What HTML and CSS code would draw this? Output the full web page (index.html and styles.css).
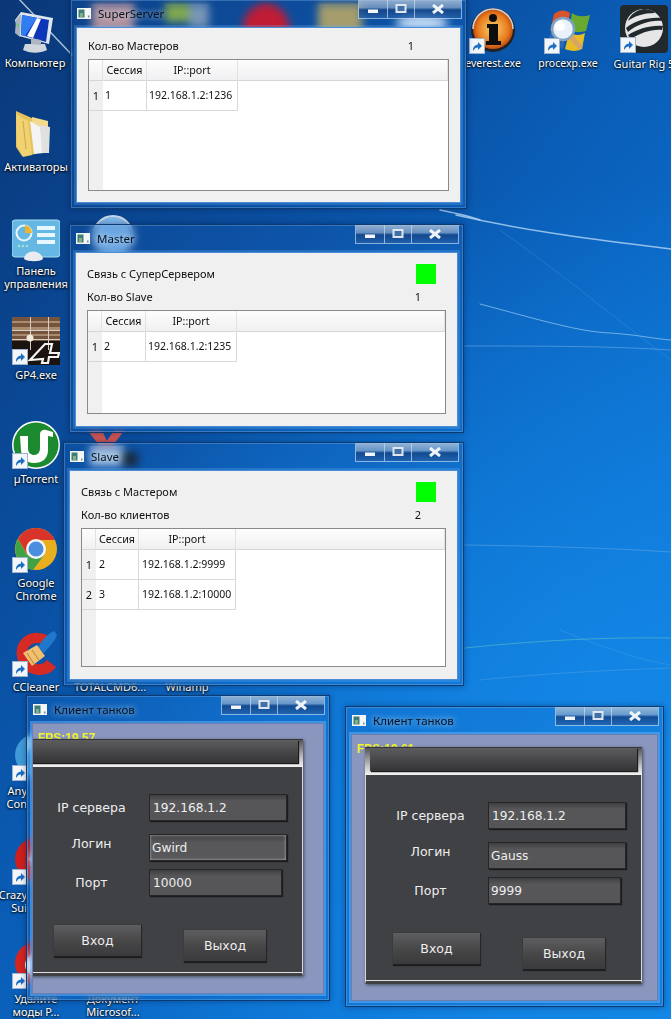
FILE: index.html
```html
<!DOCTYPE html>
<html lang="ru">
<head>
<meta charset="utf-8">
<title>Desktop</title>
<link rel="stylesheet" href="styles.css">
</head>
<body>
<svg class="defs" width="0" height="0">
  <defs>
    <symbol id="badge" viewBox="0 0 16 16">
      <rect x=".5" y=".5" width="15" height="15" fill="#f2f6fb" stroke="#9fb4cc"/>
      <path d="M4 13c0-4 1.500-6 5-6.500V4l4 4-4 4V9.500C7 9.500 5.500 10.500 4 13z" fill="#1f6fc4"/>
    </symbol>
    <symbol id="appicon" viewBox="0 0 14 11">
      <rect width="14" height="11" fill="#f4f6f6"/>
      <rect x="1.500" y="1.500" width="6" height="8" fill="#3f7d78"/>
      <rect x="3" y="5" width="3" height="4" fill="#7db08a"/>
      <rect x="11" y="7.500" width="1.500" height="2" fill="#7a8a90"/>
    </symbol>
    <symbol id="min" viewBox="0 0 12 10"><rect x="1" y="5.500" width="10" height="3.500" fill="#f2f5f9"/></symbol>
    <symbol id="max" viewBox="0 0 12 10"><rect x="1.500" y="1" width="9" height="7" fill="#3f70a8" stroke="#dfe6ee" stroke-width="2"/></symbol>
    <symbol id="close" viewBox="0 0 12 10"><path d="M1 1L11 9M11 1L1 9" stroke="#eef3f8" stroke-width="3" fill="none"/></symbol>
  </defs>
</svg>

<main class="desktop">
  <svg class="streaks" width="671" height="1019" viewBox="0 0 671 1019">
    <g fill="none" stroke-linecap="round">
      <path d="M18 -2L72 55" stroke="#cfe0f2" stroke-width="1.500" opacity=".8"/>
      <path d="M440 210C460 214 470 216 480 220" stroke="#bcd8f4" stroke-width="1.500" opacity=".8"/>
      <path d="M456 215C530 232 600 240 671 249" stroke="#a8d0f2" stroke-width="1.500" opacity=".85"/>
      <path d="M480 304C540 320 580 332 610 333C640 335 655 339 671 340" stroke="#8cc0ec" stroke-width="1" opacity=".8"/>
      <path d="M465 346C540 346 610 346 671 350" stroke="#6cabe4" stroke-width="1" opacity=".6"/>
      <path d="M465 545C540 546 610 548 671 552" stroke="#6cabe4" stroke-width="1" opacity=".5"/>
      <path d="M465 648C540 640 610 637 671 638" stroke="#5cc0c8" stroke-width="1" opacity=".6"/>
      <path d="M480 680C560 672 620 670 671 668" stroke="#5faae6" stroke-width="1" opacity=".4"/>
      <path d="M500 230C570 280 630 330 671 360" stroke="#5c9ee0" stroke-width="1" opacity=".3"/>
      <path d="M560 630C610 650 640 660 671 665" stroke="#5faae6" stroke-width="1" opacity=".3"/>
    </g>
  </svg>

  <!-- icons hidden behind the glass of the windows -->
  <div class="behind behind-pink"></div>
  <div class="behind behind-green"></div>
  <div class="behind behind-slate"></div>
  <div class="behind behind-red"></div>
  <div class="behind behind-tan"></div>
  <div class="behind behind-glow"></div>
  <div class="behind behind-disc"></div>
  <div class="behind behind-check"></div>
  <div class="behind behind-pale"></div>
  <div class="behind behind-dark"></div>

  <figure class="icon icon-computer">
    <svg width="48" height="48" viewBox="0 0 48 48">
      <path d="M4 14L10 6 42 12 38 38 8 30z" fill="#dfe6ee"/>
      <path d="M11 9L38 14 35 36 10 29z" fill="#0e36b8"/>
      <path d="M11 9L26 12 14 30 10 29z" fill="#2f7df0"/>
      <path d="M26 12L30 13 22 32 16 30z" fill="#ffffff"/>
      <path d="M5 14L10 8 9 31 4 27z" fill="#a8b2bc"/>
      <path d="M14 38L34 38 36 44C28 48 18 47 12 44z" fill="#cfd6dd"/>
      <path d="M20 32L30 34 30 39 20 38z" fill="#aeb6c0"/>
      <rect x="6" y="18" width="2" height="3" fill="#6fce6f"/>
    </svg>
    <figcaption>Компьютер</figcaption>
  </figure>

  <figure class="icon icon-folder">
    <svg width="48" height="48" viewBox="6 0 48 48">
      <path d="M10 2L28 10 30 12 30 45 16 47 10 38z" fill="#e6c25a"/>
      <path d="M26 8L42 12 42 42 28 44 26 22z" fill="#f2d98c"/>
      <path d="M24 12L34 18 38 44 28 45z" fill="#f4f4f4"/>
      <path d="M34 16L44 18 43 44 36 44z" fill="#e0e0e0"/>
      <path d="M10 5L22 12 26 46 17 48 11 36z" fill="#f0d275"/>
      <path d="M17 12L20 40" stroke="#d2a93e" stroke-width="1"/>
    </svg>
    <figcaption>Активаторы</figcaption>
  </figure>

  <figure class="icon icon-panel">
    <svg width="48" height="48" viewBox="0 0 48 48">
      <rect y="1" width="48" height="37" rx="3" fill="#65b8e4"/>
      <rect y="1" width="48" height="37" rx="3" fill="none" stroke="#a8daf2"/>
      <circle cx="12" cy="14" r="7.500" fill="none" stroke="#e8f6ff" stroke-width="2"/>
      <path d="M13 6a8 8 0 0 1 7 8h-7z" fill="#f0b030"/>
      <rect x="25" y="7" width="18" height="4" fill="#e8f6ff"/>
      <rect x="25" y="14" width="18" height="4" fill="#e8f6ff"/>
      <rect x="25" y="21" width="18" height="4" fill="#e8f6ff"/>
      <path d="M12 40C13 30 29 30 31 40C28 43 16 43 12 40z" fill="#e8ecef"/>
      <g fill="#9ee0d0"><circle cx="7" cy="27" r="1.300"/><circle cx="11" cy="27" r="1.300"/><circle cx="15" cy="27" r="1.300"/></g>
    </svg>
    <figcaption>Панель<br>управления</figcaption>
  </figure>

  <figure class="icon icon-gp4">
    <svg width="48" height="48" viewBox="0 0 48 48">
      <rect width="48" height="48" fill="#1a1310"/>
      <rect width="48" height="24" fill="#74543c"/>
      <g fill="#a98b70"><rect y="4" width="48" height="2"/><rect y="10" width="48" height="3"/><rect y="17" width="48" height="2"/></g>
      <g fill="#d8cfc4"><rect y="13" width="48" height="1"/><rect y="22" width="48" height="1"/><rect x="18" width="1" height="33"/><rect x="36" width="1" height="33"/></g>
      <circle cx="18" cy="21" r="3.500" fill="#efe7da"/>
      <path d="M18 43L33 27 40 27 38 36 47 36 46 40 37 40 36 46 30 46 31 42z" fill="none" stroke="#f3f3f3" stroke-width="2.200"/>
    </svg>
    <svg class="badge" width="16" height="16"><use href="#badge"/></svg>
    <figcaption>GP4.exe</figcaption>
  </figure>

  <figure class="icon icon-torrent">
    <svg width="48" height="48" viewBox="0 0 48 48">
      <circle cx="24" cy="24" r="24" fill="#fff"/>
      <circle cx="24" cy="24" r="22.500" fill="#1c8a2e"/>
      <path d="M8 15H16V27C16 32 19 34 22 34C26 34 28 31 28 27V13C28 10 31 8 34 9L41 11V16L36 15V29C36 38 30 42 22 42C14 42 10 36 9 30z" fill="#fff"/>
    </svg>
    <svg class="badge" width="16" height="16"><use href="#badge"/></svg>
    <figcaption>µTorrent</figcaption>
  </figure>

  <figure class="icon icon-chrome">
    <svg width="48" height="48" viewBox="0 0 48 48">
      <circle cx="24" cy="24" r="21" fill="#e8ae1e"/>
      <path d="M24 3A21 21 0 0 0 6 14L15 29 24 15H43A21 21 0 0 0 24 3z" fill="#d8342a"/>
      <path d="M6 14A21 21 0 0 0 21 45L32 30 15 30z" fill="#3fa345"/>
      <circle cx="24" cy="24" r="10" fill="#f4f4f4"/>
      <circle cx="24" cy="24" r="7.500" fill="#4a8ee0"/>
    </svg>
    <svg class="badge" width="16" height="16"><use href="#badge"/></svg>
    <figcaption>Google<br>Chrome</figcaption>
  </figure>

  <figure class="icon icon-ccleaner">
    <svg width="48" height="48" viewBox="0 0 48 48">
      <path d="M40 10C30 0 12 2 6 16C1 30 10 44 26 46C34 46 40 44 44 38L35 31C30 38 18 36 15 27C13 18 22 10 32 16z" fill="#d62a24"/>
      <path d="M42 2C34 6 30 12 26 18L32 24C37 18 43 12 45 6z" fill="#1f78cc"/>
      <path d="M11 24L25 16 33 27 20 37z" fill="#f0bf70"/>
      <path d="M15 24L22 35M20 21L27 31" stroke="#b58240" stroke-width="1"/>
    </svg>
    <svg class="badge" width="16" height="16"><use href="#badge"/></svg>
    <figcaption>CCleaner</figcaption>
  </figure>

  <figure class="icon icon-any">
    <svg width="48" height="48" viewBox="0 0 48 48">
      <circle cx="24" cy="22" r="21" fill="#3f9bd8"/>
      <path d="M14 6C22 0 34 2 38 8 28 8 20 12 14 22z" fill="#a8dcf4"/>
    </svg>
    <svg class="badge" width="16" height="16"><use href="#badge"/></svg>
    <figcaption>Any<br>Con</figcaption>
  </figure>

  <figure class="icon icon-crazy">
    <svg width="48" height="48" viewBox="0 0 48 48">
      <circle cx="24" cy="22" r="21" fill="#cf1f1c"/>
      <path d="M16 22L26 12V32z" fill="#fff"/>
    </svg>
    <svg class="badge" width="16" height="16"><use href="#badge"/></svg>
    <figcaption>Crazy<br>Sui</figcaption>
  </figure>

  <figure class="icon icon-mods">
    <svg width="48" height="48" viewBox="0 0 48 48">
      <circle cx="24" cy="22" r="21" fill="#d62420"/>
      <circle cx="24" cy="24" r="11" fill="#fff"/>
      <circle cx="24" cy="7" r="3" fill="#1c3f9c"/>
    </svg>
    <svg class="badge" width="16" height="16"><use href="#badge"/></svg>
    <figcaption>Удалите<br>моды Р...</figcaption>
  </figure>

  <figure class="icon icon-doc">
    <figcaption>Документ<br>Microsof...</figcaption>
  </figure>
  <figure class="icon icon-total"><figcaption>TOTALCMD6...</figcaption></figure>
  <figure class="icon icon-winamp"><figcaption>Winamp</figcaption></figure>

  <figure class="icon icon-everest">
    <svg width="48" height="48" viewBox="0 0 48 48">
      <defs><radialGradient id="gEv" cx=".5" cy=".5" r=".55"><stop offset="0" stop-color="#f7d667"/><stop offset=".7" stop-color="#e8791e"/><stop offset="1" stop-color="#a93a0a"/></radialGradient></defs>
      <circle cx="24" cy="24" r="22" fill="#222"/>
      <circle cx="24" cy="23" r="20" fill="url(#gEv)"/>
      <path d="M4 23a20 20 0 0 1 40 0" fill="none" stroke="#cfd6dd" stroke-width="1.500"/>
      <circle cx="24" cy="12" r="4" fill="#0d0d0d"/>
      <path d="M18 18H29V35H32V39H17V35H20V22H18z" fill="#0d0d0d"/>
    </svg>
    <svg class="badge" width="16" height="16"><use href="#badge"/></svg>
    <figcaption>everest.exe</figcaption>
  </figure>

  <figure class="icon icon-procexp">
    <svg width="48" height="48" viewBox="0 0 48 48">
      <path d="M10 8C16 3 22 4 26 7L23 24C18 21 12 21 6 25z" fill="#d9532b"/>
      <path d="M28 7C33 11 40 11 46 9L42 25C36 27 30 26 25 24z" fill="#6aa92f"/>
      <path d="M22 26C17 24 11 24 6 28L3 43C9 40 15 40 19 43z" fill="#2a68b6"/>
      <path d="M25 27C30 29 36 30 41 27L38 43C32 46 26 45 21 43z" fill="#e6bc27"/>
      <circle cx="19" cy="23" r="11" fill="#e8f2f8" stroke="#7fa3c4" stroke-width="2.500"/>
      <circle cx="16" cy="20" r="5" fill="#fff"/>
      <path d="M27 31L37 42" stroke="#d6a468" stroke-width="5"/>
    </svg>
    <svg class="badge" width="16" height="16"><use href="#badge"/></svg>
    <figcaption>procexp.exe</figcaption>
  </figure>

  <figure class="icon icon-guitar">
    <svg width="48" height="48" viewBox="0 0 48 48">
      <rect width="48" height="48" rx="4" fill="#22292d"/>
      <circle cx="24" cy="23" r="19" fill="#e6e6e6"/>
      <g fill="#22292d">
        <path d="M6 23C14 16 28 12 41 13L42 16C30 15 18 19 8 27z"/>
        <path d="M8 30C18 24 30 20 43 21L42 25C32 24 20 28 11 34z"/>
        <path d="M24 4C16 5 10 10 8 16 14 11 24 8 35 8 32 5 28 4 24 4z"/>
      </g>
    </svg>
    <svg class="badge" width="16" height="16"><use href="#badge"/></svg>
    <figcaption>Guitar Rig 5</figcaption>
  </figure>

  <section class="window win-super">
    <header class="titlebar">
      <svg class="app-icon"><use href="#appicon"/></svg>
      <h1 class="title">SuperServer</h1>
      <div class="controls">
        <span class="ctl ctl-min"><svg class="glyph"><use href="#min"/></svg></span>
        <span class="ctl ctl-max"><svg class="glyph"><use href="#max"/></svg></span>
        <span class="ctl ctl-close"><svg class="glyph"><use href="#close"/></svg></span>
      </div>
    </header>
    <div class="client client-tight">
      <div class="stat stat-first"><span>Кол-во Мастеров</span><span class="count count-left">1</span></div>
      <div class="grid-wrap">
        <table class="grid grid-super">
          <colgroup><col class="c-num"><col class="c-sess"><col class="c-ip"><col></colgroup>
          <thead><tr><th></th><th>Сессия</th><th>IP::port</th><th></th></tr></thead>
          <tbody><tr><th>1</th><td>1</td><td>192.168.1.2:1236</td></tr></tbody>
        </table>
      </div>
    </div>
  </section>

  <section class="window win-master">
    <header class="titlebar">
      <svg class="app-icon"><use href="#appicon"/></svg>
      <h1 class="title">Master</h1>
      <div class="controls">
        <span class="ctl ctl-min"><svg class="glyph"><use href="#min"/></svg></span>
        <span class="ctl ctl-max"><svg class="glyph"><use href="#max"/></svg></span>
        <span class="ctl ctl-close"><svg class="glyph"><use href="#close"/></svg></span>
      </div>
    </header>
    <div class="client">
      <div class="link"><span class="link-text">Связь с СуперСервером</span><i class="led"></i></div>
      <div class="stat"><span>Кол-во Slave</span><span class="count">1</span></div>
      <div class="grid-wrap">
        <table class="grid grid-super">
          <colgroup><col class="c-num"><col class="c-sess"><col class="c-ip"><col></colgroup>
          <thead><tr><th></th><th>Сессия</th><th>IP::port</th><th></th></tr></thead>
          <tbody><tr><th>1</th><td>2</td><td>192.168.1.2:1235</td></tr></tbody>
        </table>
      </div>
    </div>
  </section>

  <section class="window win-slave">
    <header class="titlebar">
      <svg class="app-icon"><use href="#appicon"/></svg>
      <h1 class="title">Slave</h1>
      <div class="controls">
        <span class="ctl ctl-min"><svg class="glyph"><use href="#min"/></svg></span>
        <span class="ctl ctl-max"><svg class="glyph"><use href="#max"/></svg></span>
        <span class="ctl ctl-close"><svg class="glyph"><use href="#close"/></svg></span>
      </div>
    </header>
    <div class="client">
      <div class="link"><span class="link-text">Связь с Мастером</span><i class="led"></i></div>
      <div class="stat"><span>Кол-во клиентов</span><span class="count">2</span></div>
      <div class="grid-wrap">
        <table class="grid grid-slave">
          <colgroup><col class="c-num"><col class="c-sess"><col class="c-ip"><col></colgroup>
          <thead><tr><th></th><th>Сессия</th><th>IP::port</th><th></th></tr></thead>
          <tbody>
            <tr><th>1</th><td>2</td><td>192.168.1.2:9999</td></tr>
            <tr><th>2</th><td>3</td><td>192.168.1.2:10000</td></tr>
          </tbody>
        </table>
      </div>
    </div>
  </section>

  <section class="window win-game win-game-a">
    <header class="titlebar">
      <svg class="app-icon"><use href="#appicon"/></svg>
      <h1 class="title">Клиент танков</h1>
      <div class="controls">
        <span class="ctl ctl-min"><svg class="glyph"><use href="#min"/></svg></span>
        <span class="ctl ctl-max"><svg class="glyph"><use href="#max"/></svg></span>
        <span class="ctl ctl-close"><svg class="glyph"><use href="#close"/></svg></span>
      </div>
    </header>
    <div class="client game-client">
      <span class="fps">FPS:19.57</span>
      <div class="panel">
        <div class="panel-head"><div class="panel-bar"></div></div>
        <div class="panel-body">
          <div class="row"><span class="lbl">IP сервера</span><span class="field">192.168.1.2</span></div>
          <div class="row row-login"><span class="lbl lbl-up">Логин</span><span class="field field-focus field-tight">Gwird</span></div>
          <div class="row row-port"><span class="lbl">Порт</span><span class="field field-short">10000</span></div>
          <div class="actions"><span class="btn">Вход</span><span class="btn btn-exit">Выход</span></div>
        </div>
      </div>
    </div>
  </section>

  <section class="window win-game win-game-b">
    <header class="titlebar">
      <svg class="app-icon"><use href="#appicon"/></svg>
      <h1 class="title">Клиент танков</h1>
      <div class="controls">
        <span class="ctl ctl-min"><svg class="glyph"><use href="#min"/></svg></span>
        <span class="ctl ctl-max"><svg class="glyph"><use href="#max"/></svg></span>
        <span class="ctl ctl-close"><svg class="glyph"><use href="#close"/></svg></span>
      </div>
    </header>
    <div class="client game-client">
      <span class="fps">FPS:19.61</span>
      <div class="panel">
        <div class="panel-head"><div class="panel-bar"></div></div>
        <div class="panel-body">
          <div class="row"><span class="lbl">IP сервера</span><span class="field">192.168.1.2</span></div>
          <div class="row row-login"><span class="lbl lbl-up">Логин</span><span class="field field-tight">Gauss</span></div>
          <div class="row row-port"><span class="lbl">Порт</span><span class="field field-short field-tight">9999</span></div>
          <div class="actions"><span class="btn">Вход</span><span class="btn btn-exit">Выход</span></div>
        </div>
      </div>
    </div>
  </section>
</main>
</body>
</html>
```
FILE: styles.css
```css
* { box-sizing: border-box; }
html, body { margin: 0; padding: 0; }
body { background: #0b5cb5; }
.defs { position: absolute; }

.desktop {
  position: relative;
  width: 671px;
  height: 1019px;
  overflow: hidden;
  font-family: "Noto Sans", sans-serif;
  background:
    radial-gradient(ellipse 620px 620px at 640px 800px, #1489e8 0%, rgba(20, 137, 232, 0) 100%),
    linear-gradient(125deg, #0a3777 0%, #0a4c9c 28%, #0a5fb9 50%, #0c72d2 75%, #1283e0 100%);
}
.streaks { position: absolute; left: 0; top: 0; }

/* things only seen blurred through the title bars */
.behind { position: absolute; }
.behind-pink { left: 92px; top: 4px; width: 42px; height: 34px; background: #d49c96; }
.behind-green { left: 165px; top: 4px; width: 24px; height: 18px; background: #9cba34; }
.behind-slate { left: 189px; top: 4px; width: 20px; height: 24px; background: #8fa2b4; }
.behind-red { left: 243px; top: 4px; width: 46px; height: 46px; border-radius: 50%; background: #ea0a14; }
.behind-tan { left: 318px; top: 4px; width: 44px; height: 40px; background: #c8ac58; }
.behind-glow { left: 396px; top: 14px; width: 52px; height: 18px; border-radius: 50%; background: #e4f2ff; }
.behind-disc { left: 92px; top: 215px; width: 42px; height: 42px; border-radius: 50%; background: #7fb6ea; border: 2px solid #c6d4e2; }
.behind-check {
  left: 88px;
  top: 431px;
  width: 36px;
  height: 14px;
  background: #d05656;
  clip-path: polygon(0 0, 40% 0, 52% 70%, 72% 0, 100% 0, 70% 100%, 30% 100%);
}
.behind-pale { left: 90px; top: 446px; width: 34px; height: 20px; background: #b4cce6; }
.behind-dark { left: 122px; top: 452px; width: 16px; height: 14px; background: #1a1a1a; }

.icon {
  position: absolute;
  margin: 0;
  width: 76px;
  display: flex;
  flex-direction: column;
  align-items: center;
}
.icon figcaption {
  width: 76px;
  font-size: 11px;
  line-height: 13px;
  color: #fff;
  text-align: center;
  white-space: nowrap;
  text-shadow: 0 1px 2px #000, 0 0 3px rgba(0, 0, 0, .8);
}
.badge { position: absolute; left: 14px; top: 32px; }

.icon-computer { left: -3px; top: 6px; }
.icon-computer figcaption { margin-top: 2px; }
.icon-folder { left: -2px; top: 109px; }
.icon-folder figcaption { margin-top: 3px; }
.icon-panel { left: -2px; top: 219px; }
.icon-panel figcaption { margin-top: -3px; }
.icon-gp4 { left: -2px; top: 317px; }
.icon-gp4 figcaption { margin-top: 3px; }
.icon-torrent { left: -2px; top: 421px; }
.icon-torrent figcaption { margin-top: 3px; }
.icon-chrome { left: -2px; top: 525px; }
.icon-chrome figcaption { margin-top: 3px; }
.icon-ccleaner { left: -2px; top: 629px; }
.icon-ccleaner figcaption { margin-top: 3px; }
.icon-any { left: -2px; top: 733px; }
.icon-any figcaption { margin-top: 3px; text-align: right; width: 29px; align-self: flex-start; }
.icon-crazy { left: -2px; top: 837px; }
.icon-crazy figcaption { margin-top: 3px; text-align: right; width: 29px; align-self: flex-start; }
.icon-mods { left: -2px; top: 941px; }
.icon-mods figcaption { margin-top: 3px; }
.icon-doc { left: 75px; top: 992px; }
.icon-total { left: 72px; top: 680px; }
.icon-winamp { left: 149px; top: 680px; }
.icon-everest { left: 455px; top: 6px; }
.icon-everest figcaption { margin-top: 3px; font-size: 10.500px; }
.icon-procexp { left: 530px; top: 6px; }
.icon-procexp figcaption { margin-top: 3px; font-size: 10.500px; }
.icon-guitar { left: 606px; top: 5px; }
.icon-guitar figcaption { margin-top: 4px; }

/* windows sit freely on the desktop */
.window {
  position: absolute;
  display: flex;
  flex-direction: column;
  border: 1px solid #0c3a72;
  padding: 0 5px 5px;
  background: rgba(24, 100, 190, .2);
  -webkit-backdrop-filter: blur(4px);
  backdrop-filter: blur(4px);
  box-shadow: inset 0 0 0 1px rgba(150, 195, 240, .3), 0 0 6px rgba(0, 20, 60, .4);
}
.win-super { left: 70px; top: -1px; width: 397px; height: 210px; }
.win-master { left: 69px; top: 224px; width: 395px; height: 209px; }
.win-slave { left: 63px; top: 442px; width: 401px; height: 244px; }
.win-game-a { left: 26px; top: 695px; width: 304px; height: 306px; }
.win-game-b { left: 345px; top: 706px; width: 319px; height: 301px; }
.win-game-a .client { margin-bottom: 1px; }

.titlebar {
  flex: none;
  height: 27px;
  display: flex;
  align-items: center;
  gap: 7px;
  padding: 0 0 1px 1px;
}
.app-icon { width: 14px; height: 11px; flex: none; }
.title {
  margin: 0;
  font-family: "Noto Sans", sans-serif;
  font-size: 11.500px;
  font-weight: 400;
  color: #07121f;
  text-shadow: 0 0 6px rgba(255, 255, 255, .6), 0 0 10px rgba(255, 255, 255, .4);
}
.controls {
  margin-left: auto;
  align-self: flex-start;
  height: 19px;
  display: flex;
  border: 1px solid rgba(190, 215, 240, .7);
  border-top: 0;
  margin-right: -1px;
}
.ctl {
  display: flex;
  align-items: center;
  justify-content: center;
  background: linear-gradient(rgba(180, 198, 218, .8) 0%, rgba(140, 168, 200, .7) 42%, rgba(20, 68, 135, .85) 55%, rgba(36, 96, 170, .8) 100%);
  border-right: 1px solid rgba(200, 220, 240, .7);
}
.ctl-min { width: 29px; }
.ctl-max { width: 27px; }
.ctl-close { width: 46px; border-right: 0; }
.glyph { width: 12px; height: 10px; }

.client {
  flex: 1;
  min-height: 0;
  background: #f0f0f0;
  border: 1px solid #4a8cd8;
  box-shadow: 0 0 0 2px rgba(100, 175, 245, .28);
  padding: 0 11px 12px;
  display: flex;
  flex-direction: column;
  font-size: 11px;
  color: #111;
}
.client-tight { padding-bottom: 11px; }
.link {
  height: 20px;
  margin-top: 11px;
  display: flex;
  align-items: center;
  justify-content: space-between;
  padding-right: 10px;
}
.link-text { padding-bottom: 2px; }
.led { width: 20px; height: 20px; background: #00ff00; }
.stat {
  height: 13px;
  margin-top: 7px;
  margin-bottom: 6px;
  display: flex;
  align-items: flex-start;
  line-height: 12px;
}
.stat-first { margin-top: 12px; }
.count { margin-left: auto; margin-right: 25px; }
.count-left { margin-right: 35px; }

.grid-wrap {
  flex: 1;
  min-height: 0;
  border: 1px solid #8a8a8a;
  background: linear-gradient(90deg, #f0f0f0 14px, #fff 14px);
  overflow: hidden;
}
.grid {
  width: 100%;
  table-layout: fixed;
  border-collapse: separate;
  border-spacing: 0;
  font-size: 10.500px;
}
.c-num { width: 14px; }
.c-sess { width: 44px; }
.c-ip { width: 91px; }
.grid-slave .c-sess { width: 43px; }
.grid-slave .c-ip { width: 97px; }
.grid-slave td { padding-left: 3px; }
.grid thead th {
  height: 21px;
  padding: 0;
  font-size: 10.700px;
  font-weight: 400;
  text-align: center;
  color: #111;
  background: linear-gradient(#fdfdfd, #f0f0f2);
  border-bottom: 1px solid #d6d6d6;
  border-right: 1px solid #e2e2e2;
}
.grid tbody th {
  height: 30px;
  padding: 0;
  font-weight: 400;
  font-size: 11px;
  background: #f0f0f0;
  border-bottom: 1px solid #d8d8d8;
}
.grid td {
  padding: 0 0 1px 2px;
  background: #fff;
  border-right: 1px solid #d8d8d8;
  border-bottom: 1px solid #d8d8d8;
  white-space: nowrap;
}
.grid-slave td { padding-left: 3px; }

/* game client */
.game-client {
  position: relative;
  overflow: hidden;
  padding: 0;
  background: #8a96bd;
  border-color: #6a7fb0;
  box-shadow: 0 0 0 2px rgba(100, 175, 245, .55);
  font-family: "DejaVu Sans", sans-serif;
}
.win-game-a .panel { margin: 15px 0 0 -7px; }
.win-game-b .panel { margin: 12px 0 0 13px; }
.fps {
  position: absolute;
  left: 5px;
  top: 7px;
  font-family: "Liberation Sans", sans-serif;
  font-size: 12px;
  font-weight: 700;
  line-height: 14px;
  color: #f4f42a;
}

.panel {
  position: relative;
  z-index: 1;
  width: 277px;
  height: 237px;
  flex: none;
  display: flex;
  flex-direction: column;
  box-shadow: 1px 1px 3px rgba(0, 0, 0, .5);
}
.panel-head {
  flex: none;
  height: 28px;
  padding: 0 5px 4px;
  background: linear-gradient(#555 0%, #c8c8c8 70%, #f2f2f2 100%);
  border-top: 1px solid #35363a;
}
.panel-bar {
  height: 23px;
  background: linear-gradient(#5c5c5e, #343436);
  box-shadow: 1px 1px 1px #1c1c1c;
}
.panel-body {
  flex: 1;
  padding: 27px 0 0;
  background: #404145;
  border-left: 1px solid #d8d8d8;
  border-right: 1px solid #d8d8d8;
  border-bottom: 3px solid #404145;
  box-shadow: inset 0 -1px 0 #e0e0e0;
  font-size: 12.500px;
  color: #eee;
}
.row {
  display: grid;
  grid-template-columns: 122px 138px;
  align-items: center;
}
.row-login { margin-top: 13px; }
.row-port { margin-top: 8px; }
.lbl { text-align: center; padding-left: 7px; }
.lbl-up { padding-bottom: 8px; }
.field {
  height: 27px;
  padding: 0 3px;
  display: flex;
  align-items: center;
  font-size: 12.200px;
  background: linear-gradient(#3f3f41 0%, #575759 25%, #555557 100%);
  border: 1px solid #26262a;
  box-shadow: 1px 1px 1px #1c1c1e;
}
.field-short { width: 133px; }
.field-tight { padding-left: 2px; }
.field-focus {
  background: linear-gradient(#3f3f41, #58585a 30%);
  box-shadow: inset 0 0 3px #b8b8b8, 1px 1px 1px #1c1c1e;
}
.actions {
  margin-top: 29px;
  padding-left: 27px;
  display: flex;
  align-items: flex-start;
  gap: 42px;
}
.btn {
  width: 88px;
  height: 33px;
  display: flex;
  align-items: center;
  justify-content: center;
  background: linear-gradient(#5e5e60 0%, #484849 50%, #3a3a3c 100%);
  border-bottom: 2px solid #1e1e20;
  border-right: 1px solid #26262a;
  box-shadow: 0 0 1px #222;
}
.btn-exit { width: 83px; margin-top: 5px; }
```
